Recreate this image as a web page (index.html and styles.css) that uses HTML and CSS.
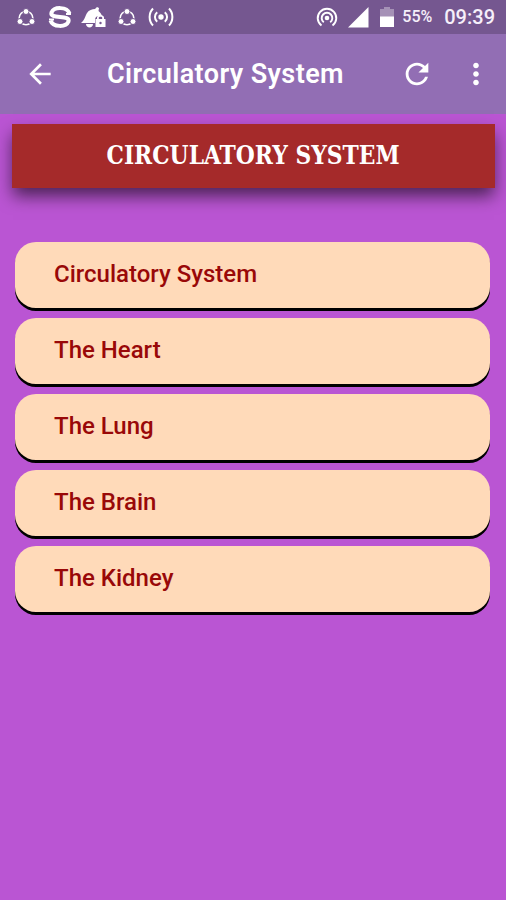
FILE: index.html
```html
<!DOCTYPE html>
<html lang="en">
<head>
    <meta charset="UTF-8">
    <meta name="viewport" content="width=device-width, initial-scale=1.0">
    <title>Circulatory System</title>
    <link rel="stylesheet" href="styles.css">
</head>
<body>
    <div class="status-bar">
        <div class="status-left">
            <svg class="share" width="20" height="20" viewBox="0 0 20 20">
                <circle cx="10" cy="11" r="6.8" fill="none" stroke="#fff" stroke-width="1.600"/>
                <g stroke="#755790" stroke-width="1">
                    <circle cx="10" cy="4.500" r="3"/>
                    <circle cx="4" cy="14.500" r="3"/>
                    <circle cx="16" cy="14.500" r="3"/>
                </g>
            </svg>
            <svg class="s-logo" width="26" height="24" viewBox="0 0 26 24">
                <g fill="none" stroke="#fff" stroke-width="4">
                    <path d="M22.500 8.500C20 1.500 7 1.500 4.500 7.500c-1 3.500 3 4 8.500 4.500s9.500 1 8.500 4.500c-2.500 6-15.500 6-18-1"/>
                    <path d="M2 14.500h5M19 9h5" stroke-width="2"/>
                </g>
            </svg>
            <svg class="bell" width="26" height="24" viewBox="0 0 26 24">
                <path d="M0 18c4-3 4-7 6-10 2-3 5-4 8-4l2-2 2 1-.5 3c2 2 3 3 3.500 5h-3c-3 0-4 2-4 4v3H0z"/>
                <path d="M5 19h7c0 4.500-7 4.500-7 0z"/>
                <path d="M16 14v-1.500c0-3.500 7-3.500 7 0V14h1.500v8h-10v-8zm1.800 0h3.400v-1.300c0-1.300-3.400-1.300-3.400 0z" fill-rule="evenodd"/>
                <circle cx="19.500" cy="18" r="1.200" fill="#755790"/>
            </svg>
            <svg class="share" width="20" height="20" viewBox="0 0 20 20">
                <circle cx="10" cy="11" r="6.8" fill="none" stroke="#fff" stroke-width="1.600"/>
                <g stroke="#755790" stroke-width="1">
                    <circle cx="10" cy="4.500" r="3"/>
                    <circle cx="4" cy="14.500" r="3"/>
                    <circle cx="16" cy="14.500" r="3"/>
                </g>
            </svg>
            <svg class="waves" width="26" height="20" viewBox="0 0 26 20">
                <circle cx="13" cy="10" r="2.700"/>
                <path d="M9.200 5.200c-3 2.500-3 7 0 9.600M16.800 5.200c3 2.500 3 7 0 9.600M5 1.500c-4.500 4.500-4.500 12.500 0 17M21 1.500c4.500 4.500 4.500 12.500 0 17" fill="none" stroke="#fff" stroke-width="2"/>
            </svg>
        </div>
        <div class="status-right">
            <svg class="hotspot" width="22" height="22" viewBox="0 0 22 22">
                <circle cx="11" cy="12" r="2.300"/>
                <path d="M5.500 19.500a9.300 9.300 0 1 1 11 0M7.800 16.300a5.300 5.300 0 1 1 6.400 0" fill="none" stroke="#fff" stroke-width="1.900"/>
            </svg>
            <svg class="signal" width="21" height="21" viewBox="0 0 21 21">
                <path d="M0 20.500L20.500 0v20.500z"/>
            </svg>
            <svg class="battery" width="14" height="21" viewBox="0 0 14 21">
                <path d="M0 2h4V0h6v2h4v8H0z" opacity=".35"/>
                <path d="M0 9.500h14V20H0z"/>
            </svg>
            <span class="percent">55%</span>
            <span class="clock">09:39</span>
        </div>
    </div>

    <div class="app-bar">
        <svg class="back" width="32" height="32" viewBox="0 0 24 24">
            <path d="M20 11H7.830l5.590-5.590L12 4l-8 8 8 8 1.410-1.410L7.830 13H20v-2z"/>
        </svg>
        <div class="app-title">Circulatory System</div>
        <svg class="refresh" width="34" height="34" viewBox="0 0 24 24">
            <path d="M17.650 6.350C16.200 4.900 14.210 4 12 4c-4.420 0-7.990 3.580-7.990 8s3.570 8 7.990 8c3.730 0 6.840-2.550 7.730-6h-2.080c-.820 2.330-3.040 4-5.650 4-3.310 0-6-2.690-6-6s2.690-6 6-6c1.660 0 3.140.690 4.220 1.780L13 11h7V4l-2.350 2.350z"/>
        </svg>
        <svg class="more" width="34" height="34" viewBox="0 0 24 24">
            <path d="M12 8c1.100 0 2-.900 2-2s-.900-2-2-2-2 .900-2 2 .900 2 2 2zm0 2c-1.100 0-2 .900-2 2s.900 2 2 2 2-.900 2-2-.900-2-2-2zm0 6c-1.100 0-2 .900-2 2s.900 2 2 2 2-.900 2-2-.900-2-2-2z"/>
        </svg>
    </div>

    <div class="content">
        <h1 class="banner"><span>CIRCULATORY SYSTEM</span></h1>
        <ul class="topics">
            <li>Circulatory System</li>
            <li>The Heart</li>
            <li>The Lung</li>
            <li>The Brain</li>
            <li>The Kidney</li>
        </ul>
    </div>
</body>
</html>
```
FILE: styles.css
```css
*{
    box-sizing: border-box;
}

body{
    background-color: mediumorchid;
    font-family: Roboto, sans-serif;
    margin: 0;
    height: 900px;
    overflow: hidden;
}

svg{
    fill: #fff;
    display: block;
    flex: none;
}

.status-bar{
    background-color: #755790;
    color: #f6effa;
    height: 34px;
    display: flex;
    justify-content: space-between;
}

.status-left, .status-right{
    display: flex;
    align-items: center;
    height: 34px;
}

.status-left{
    padding-left: 16px;
}

.s-logo{
    margin-left: 11px;
}

.bell{
    margin-left: 8px;
}

.bell + .share{
    margin-left: 10px;
}

.waves{
    margin-left: 11px;
}

.status-right{
    padding-right: 11px;
}

.signal{
    margin-left: 10px;
}

.battery{
    margin-left: 11px;
}

.percent{
    font-size: 16px;
    font-weight: 500;
    margin-left: 8px;
    padding-bottom: 2px;
}

.clock{
    font-size: 20px;
    font-weight: 500;
    margin-left: 12px;
}

.app-bar{
    background-color: #926eb4;
    height: 80px;
    display: flex;
    align-items: center;
    padding: 0 13px 1px 24px;
}

.app-title{
    color: #fff;
    font-size: 27px;
    font-weight: 600;
    letter-spacing: 0.4px;
    margin-left: 51px;
    flex: 1;
    white-space: nowrap;
}

.more{
    margin-left: 25px;
}

.content{
    padding: 10px 11px 0 12px;
}

.banner{
    background-color: brown;
    color: #fff;
    font-family: "DejaVu Serif Condensed", "DejaVu Serif", serif;
    font-size: 26px;
    font-weight: bold;
    font-stretch: condensed;
    line-height: 63px;
    height: 64px;
    margin: 0;
    display: flex;
    justify-content: center;
    white-space: nowrap;
    box-shadow: 0 9px 16px -1px rgba(0, 0, 0, 0.6);
}

.banner span{
    transform: scaleX(0.933);
}

.topics{
    list-style: none;
    margin: 54px 5px 0 3px;
    padding: 0;
    display: flex;
    flex-direction: column;
    gap: 10px;
}

.topics li{
    background-color: peachpuff;
    border-radius: 21px;
    box-shadow: 0 3px 0 #000;
    color: #990808;
    font-size: 24px;
    font-weight: 500;
    line-height: 64px;
    height: 66px;
    padding-left: 39px;
}
```
